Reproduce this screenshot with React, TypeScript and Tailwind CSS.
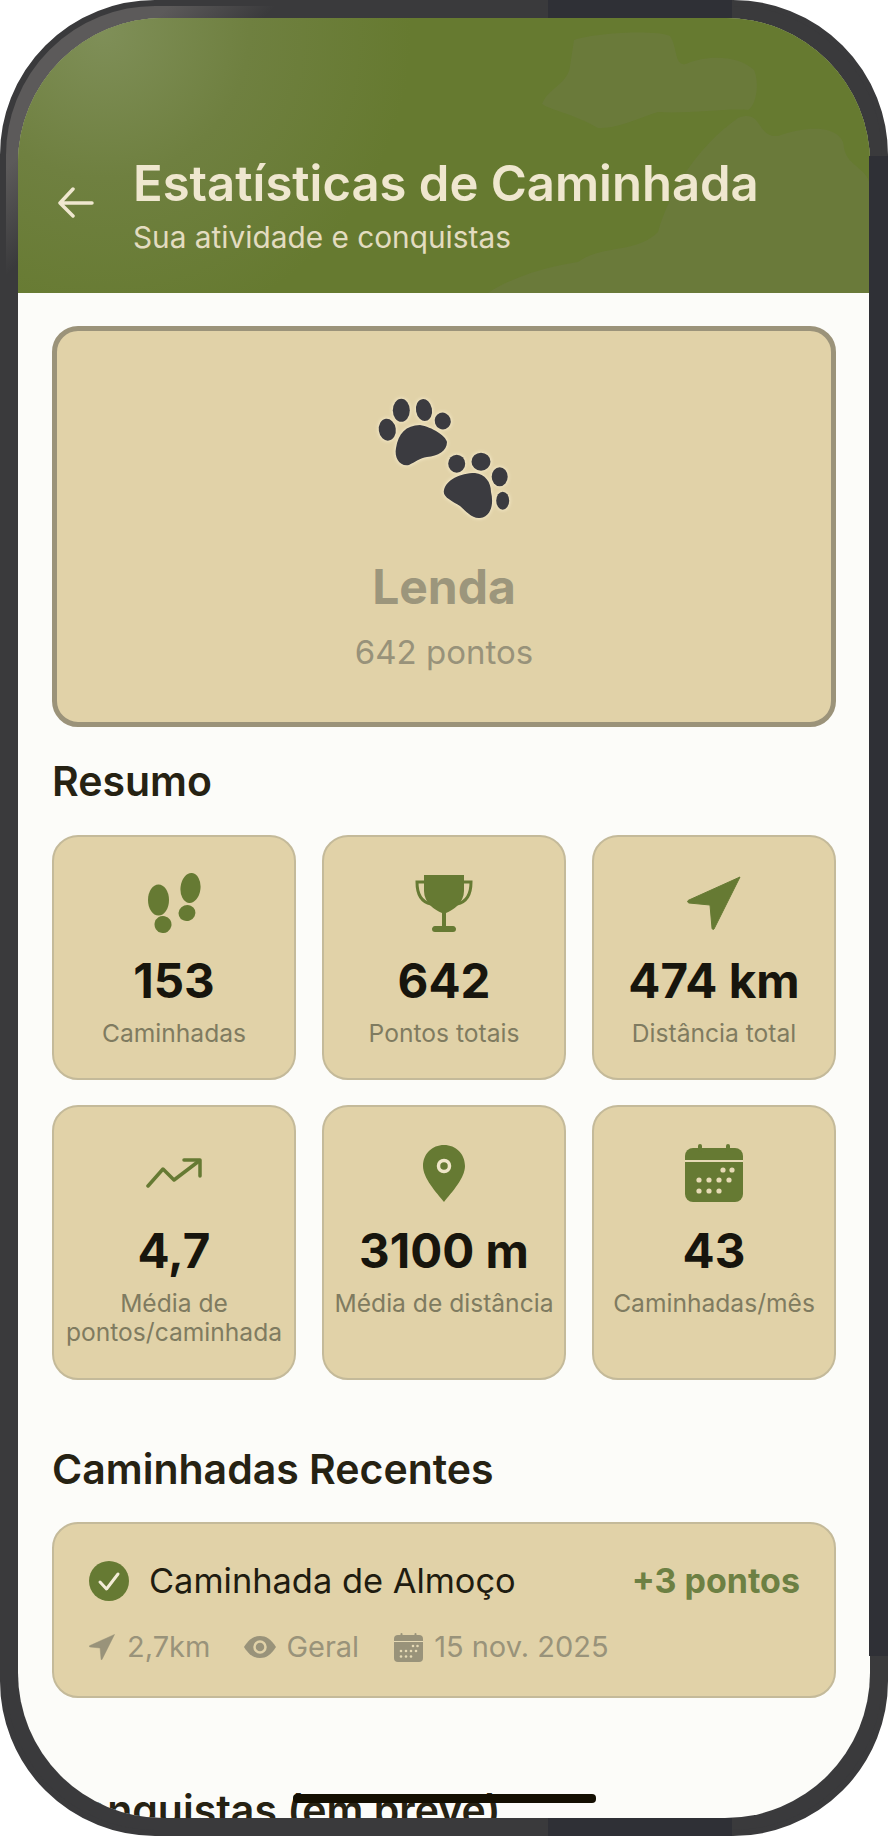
import type { ReactNode } from 'react';

const FONT = "font-['Inter','Noto_Sans',sans-serif]";

function Paws() {
  return (
    <svg width="134" height="122" viewBox="-1 -1 134 122" className="drop-shadow-[0_0_2px_#fff6da]" fill="#3b3b40">
      <ellipse cx="9.3" cy="31.7" rx="8.5" ry="11" transform="rotate(-8 9.3 31.7)" />
      <ellipse cx="23.3" cy="12.3" rx="8.5" ry="11.5" />
      <ellipse cx="46" cy="12" rx="8" ry="11" transform="rotate(-10 46 12)" />
      <ellipse cx="64.7" cy="23" rx="8" ry="8.5" transform="rotate(-20 64.7 23)" />
      <path d="M18 50C20 36 28 27 42 27C54 29 68 38 69 44C69 53 60 58 49 59C42 60 37 64 31 67C22 69 16 60 18 50Z" />
      <ellipse cx="78.7" cy="65.7" rx="8.5" ry="9" />
      <ellipse cx="103" cy="63.7" rx="9.5" ry="9" />
      <ellipse cx="121.7" cy="78.700" rx="8" ry="9.500" />
      <ellipse cx="124.7" cy="102.7" rx="6.5" ry="9" />
      <path d="M66 92C68 82 82 75 97 75C107 76 113 84 113 94C116 106 113 119 102 120C94 121 88 113 82 108C74 103 64 99 66 92Z" />
    </svg>
  );
}

function FootIcon() {
  return (
    <svg width="53" height="60" viewBox="0 0 53 60" fill="#667a33">
      <ellipse cx="10.5" cy="27" rx="10.500" ry="15.500" />
      <ellipse cx="15" cy="51.5" rx="8.500" ry="8.5" transform="rotate(12 15 51.5)" />
      <ellipse cx="42.5" cy="15" rx="10" ry="15" transform="rotate(6 42.5 15)" />
      <ellipse cx="39" cy="40" rx="8.500" ry="8" transform="rotate(-20 39 40)" />
    </svg>
  );
}

function TrophyIcon() {
  return (
    <svg width="58" height="57" viewBox="0 0 58 57">
      <path d="M9 7H2C2 18 6 27 16 29M49 7h7C56 18 52 27 42 29" fill="none" stroke="#667a33" strokeWidth="3" />
      <path d="M9 0H49V16C49 28 38 35 31 38V51H38C40 51 41 53 41 54C41 56 40 57 38 57H20C18 57 17 56 17 54C17 53 18 51 20 51H27V38C20 35 9 28 9 16Z" fill="#667a33" />
    </svg>
  );
}

function NavIcon({ size = 54, color = '#667a33' }: { size?: number; color?: string }) {
  return (
    <svg width={size} height={size} viewBox="0 0 54 54" fill={color}>
      <path d="M53 1L27 53C26 54 25 53 25 52L23 29L2 27C0 26 0 25 2 24Z" stroke={color} strokeLinejoin="round" />
    </svg>
  );
}

function TrendIcon() {
  return (
    <svg width="56" height="30" viewBox="0 0 56 30" fill="none" stroke="#667a33" strokeWidth="3.500" strokeLinecap="round" strokeLinejoin="round">
      <path d="M2 28L17 11L28 22L53 3" />
      <path d="M38 2H54V18" />
    </svg>
  );
}

function PinIcon() {
  return (
    <svg width="42" height="57" viewBox="0 0 42 57">
      <path d="M21 0C33 0 42 9 42 21C42 33 29 47 21 57C13 47 0 33 0 21C0 9 9 0 21 0Z" fill="#667a33" />
      <circle cx="21" cy="21" r="5.500" fill="#667a33" stroke="#efe6c8" strokeWidth="3.500" />
    </svg>
  );
}

function CalendarIcon({ size = 58, color = '#667a33', dot = '#e6dab5' }: { size?: number; color?: string; dot?: string }) {
  const dots = [
    [38, 26], [47, 26],
    [14, 36], [24, 36], [34, 36], [44, 36],
    [14, 47], [24, 47], [34, 47],
  ];
  return (
    <svg width={size} height={size} viewBox="0 0 58 58" fill={color}>
      <rect x="0" y="4" width="58" height="54" rx="8" />
      <rect x="13" y="0" width="4" height="8" rx="2" />
      <rect x="41" y="0" width="4" height="8" rx="2" />
      <rect x="0" y="16" width="58" height="2" fill={dot} />
      {dots.map(([x, y]) => (
        <circle key={`${x}-${y}`} cx={x} cy={y} r="2.600" fill={dot} />
      ))}
    </svg>
  );
}

function StatCard({ icon, value, label, height }: { icon: ReactNode; value: string; label: ReactNode; height: string }) {
  return (
    <div className={`${height} flex flex-col items-center rounded-[26px] border-2 border-[#c4ba9a] bg-[#e1d2a8] pt-[36px] text-center`}>
      <div className="flex h-[60px] items-center justify-center">{icon}</div>
      <div className="mt-[20px] text-[47.5px] leading-[56px] font-bold text-[#17150d]">{value}</div>
      <div className="mt-[10px] text-[24.6px] leading-[29px] whitespace-nowrap text-[#7f7b60]">{label}</div>
    </div>
  );
}

export default function App() {
  return (
    <div className={`${FONT} relative h-[1836px] w-[888px] overflow-hidden bg-white`}>
      {/* moldura do telefone */}
      <div className="h-full rounded-[155px] border-[6px] border-[#3a3a3c] bg-[#3a3a3c] bg-[linear-gradient(135deg,#5c5a5a_0%,#5c5a5a_6%,#3a3a3c_10%)] p-[12px]">
        <div className="flex h-full flex-col overflow-hidden rounded-[145px] bg-[#fcfcf9]">
          {/* cabeçalho */}
          <header className="relative flex h-[275px] shrink-0 overflow-hidden bg-[#667a30] bg-[radial-gradient(circle_at_10%_5%,#7f8f58_0%,#6f8040_18%,#667a30_38%)]">
            <svg className="absolute inset-0" width="852" height="275" viewBox="0 0 852 275" fill="#6a7a3a">
              <path d="M556 22C580 14 640 12 652 18C660 30 656 48 668 46C690 36 722 38 736 52C742 66 738 88 730 92C712 90 670 96 640 94C610 104 600 110 580 110C556 96 532 92 524 86C530 70 550 66 552 48Z" />
              <path d="M720 100C745 90 738 120 760 118C800 104 826 112 826 130C830 150 852 150 852 170V275H470C490 262 520 250 560 244C585 226 618 236 640 214C652 172 680 128 720 100Z" />
            </svg>
            <div className="relative mt-[169px] ml-[40px] h-[31px] w-[36px] shrink-0 self-start">
              <svg width="36" height="31" viewBox="0 0 36 31" fill="none" stroke="#efe7cf" strokeWidth="3.500" strokeLinecap="round" strokeLinejoin="round">
                <path d="M34 16H3M15 2L2 16L15 29" />
              </svg>
            </div>
            <div className="relative mt-[138px] ml-[39px]">
              <h1 className="text-[49px] leading-[56px] font-semibold whitespace-nowrap text-[#efe7cf]">Estatísticas de Caminhada</h1>
              <p className="mt-[7px] text-[29.8px] leading-[36px] whitespace-nowrap text-[#e3dcc0]">Sua atividade e conquistas</p>
            </div>
          </header>

          <main className="px-[34px]">
            {/* nível */}
            <section className="mt-[33px] flex h-[401px] flex-col items-center rounded-[26px] border-[5px] border-[#9b937a] bg-[#e1d2a8] pt-[66px]">
              <Paws />
              <div className="mt-[41px] text-[48px] leading-[54px] font-bold text-[#9c967c]">Lenda</div>
              <div className="mt-[19px] text-[33px] leading-[38px] text-[#98927a]">642 pontos</div>
            </section>

            <h2 className="mt-[32px] text-[41px] leading-[44px] font-semibold text-[#262213]">Resumo</h2>

            <div className="mt-[32px] grid grid-cols-3 gap-x-[26px] gap-y-[25px]">
              <StatCard height="h-[245px]" icon={<FootIcon />} value="153" label="Caminhadas" />
              <StatCard height="h-[245px]" icon={<TrophyIcon />} value="642" label="Pontos totais" />
              <StatCard height="h-[245px]" icon={<NavIcon />} value="474 km" label="Distância total" />
              <StatCard height="h-[275px]" icon={<TrendIcon />} value="4,7" label={<>Média de<br />pontos/caminhada</>} />
              <StatCard height="h-[275px]" icon={<PinIcon />} value="3100 m" label="Média de distância" />
              <StatCard height="h-[275px]" icon={<CalendarIcon />} value="43" label="Caminhadas/mês" />
            </div>

            <h2 className="mt-[67px] text-[41px] leading-[44px] font-semibold text-[#262213]">Caminhadas Recentes</h2>

            <section className="mt-[31px] flex h-[176px] flex-col rounded-[26px] border-2 border-[#c4ba9a] bg-[#e1d2a8] pt-[37px] pr-[34px] pl-[35px]">
              <div className="flex items-center">
                <svg width="40" height="40" viewBox="0 0 40 40">
                  <circle cx="20" cy="20" r="20" fill="#667a33" />
                  <path d="M11 21L17.500 28L29 13" fill="none" stroke="#f3ecd6" strokeWidth="3" strokeLinecap="round" strokeLinejoin="round" />
                </svg>
                <div className="ml-[20px] text-[34.4px] leading-[40px] whitespace-nowrap text-[#1f1c10]">Caminhada de Almoço</div>
                <div className="ml-auto text-[34px] leading-[40px] font-bold whitespace-nowrap text-[#6d8043]">+3 pontos</div>
              </div>
              <div className="mt-[28px] flex items-center text-[29px] leading-[36px] text-[#99937a]">
                <NavIcon size={26} color="#99937a" />
                <span className="ml-[12px]">2,7km</span>
                <svg className="ml-[34px]" width="32" height="22" viewBox="0 0 32 22">
                  <path d="M0 11C5 3 10 0 16 0C22 0 27 3 32 11C27 19 22 22 16 22C10 22 5 19 0 11Z" fill="#99937a" />
                  <circle cx="16" cy="11" r="5.500" fill="#99937a" stroke="#e1d2a8" strokeWidth="2.500" />
                </svg>
                <span className="ml-[10px]">Geral</span>
                <span className="ml-[35px]">
                  <CalendarIcon size={29} color="#99937a" />
                </span>
                <span className="ml-[11px]">15 nov. 2025</span>
              </div>
            </section>

            <h2 className="mt-[90px] text-[41px] leading-[44px] font-semibold whitespace-nowrap text-[#262213]">Conquistas (em breve)</h2>
          </main>
        </div>
      </div>

      {/* barra inicial */}
      <div className="absolute top-[1794px] left-[293px] h-[9px] w-[303px] rounded-[4px] bg-[#140f02]" />
      {/* emendas da moldura */}
      <div className="absolute top-0 left-[548px] h-[18px] w-[184px] bg-[#2f3036]" />
      <div className="absolute bottom-0 left-[548px] h-[18px] w-[184px] bg-[#2f3036]" />
      <div className="absolute top-[156px] right-0 h-[1500px] w-[19px] bg-[#2f3036]" />
    </div>
  );
}
